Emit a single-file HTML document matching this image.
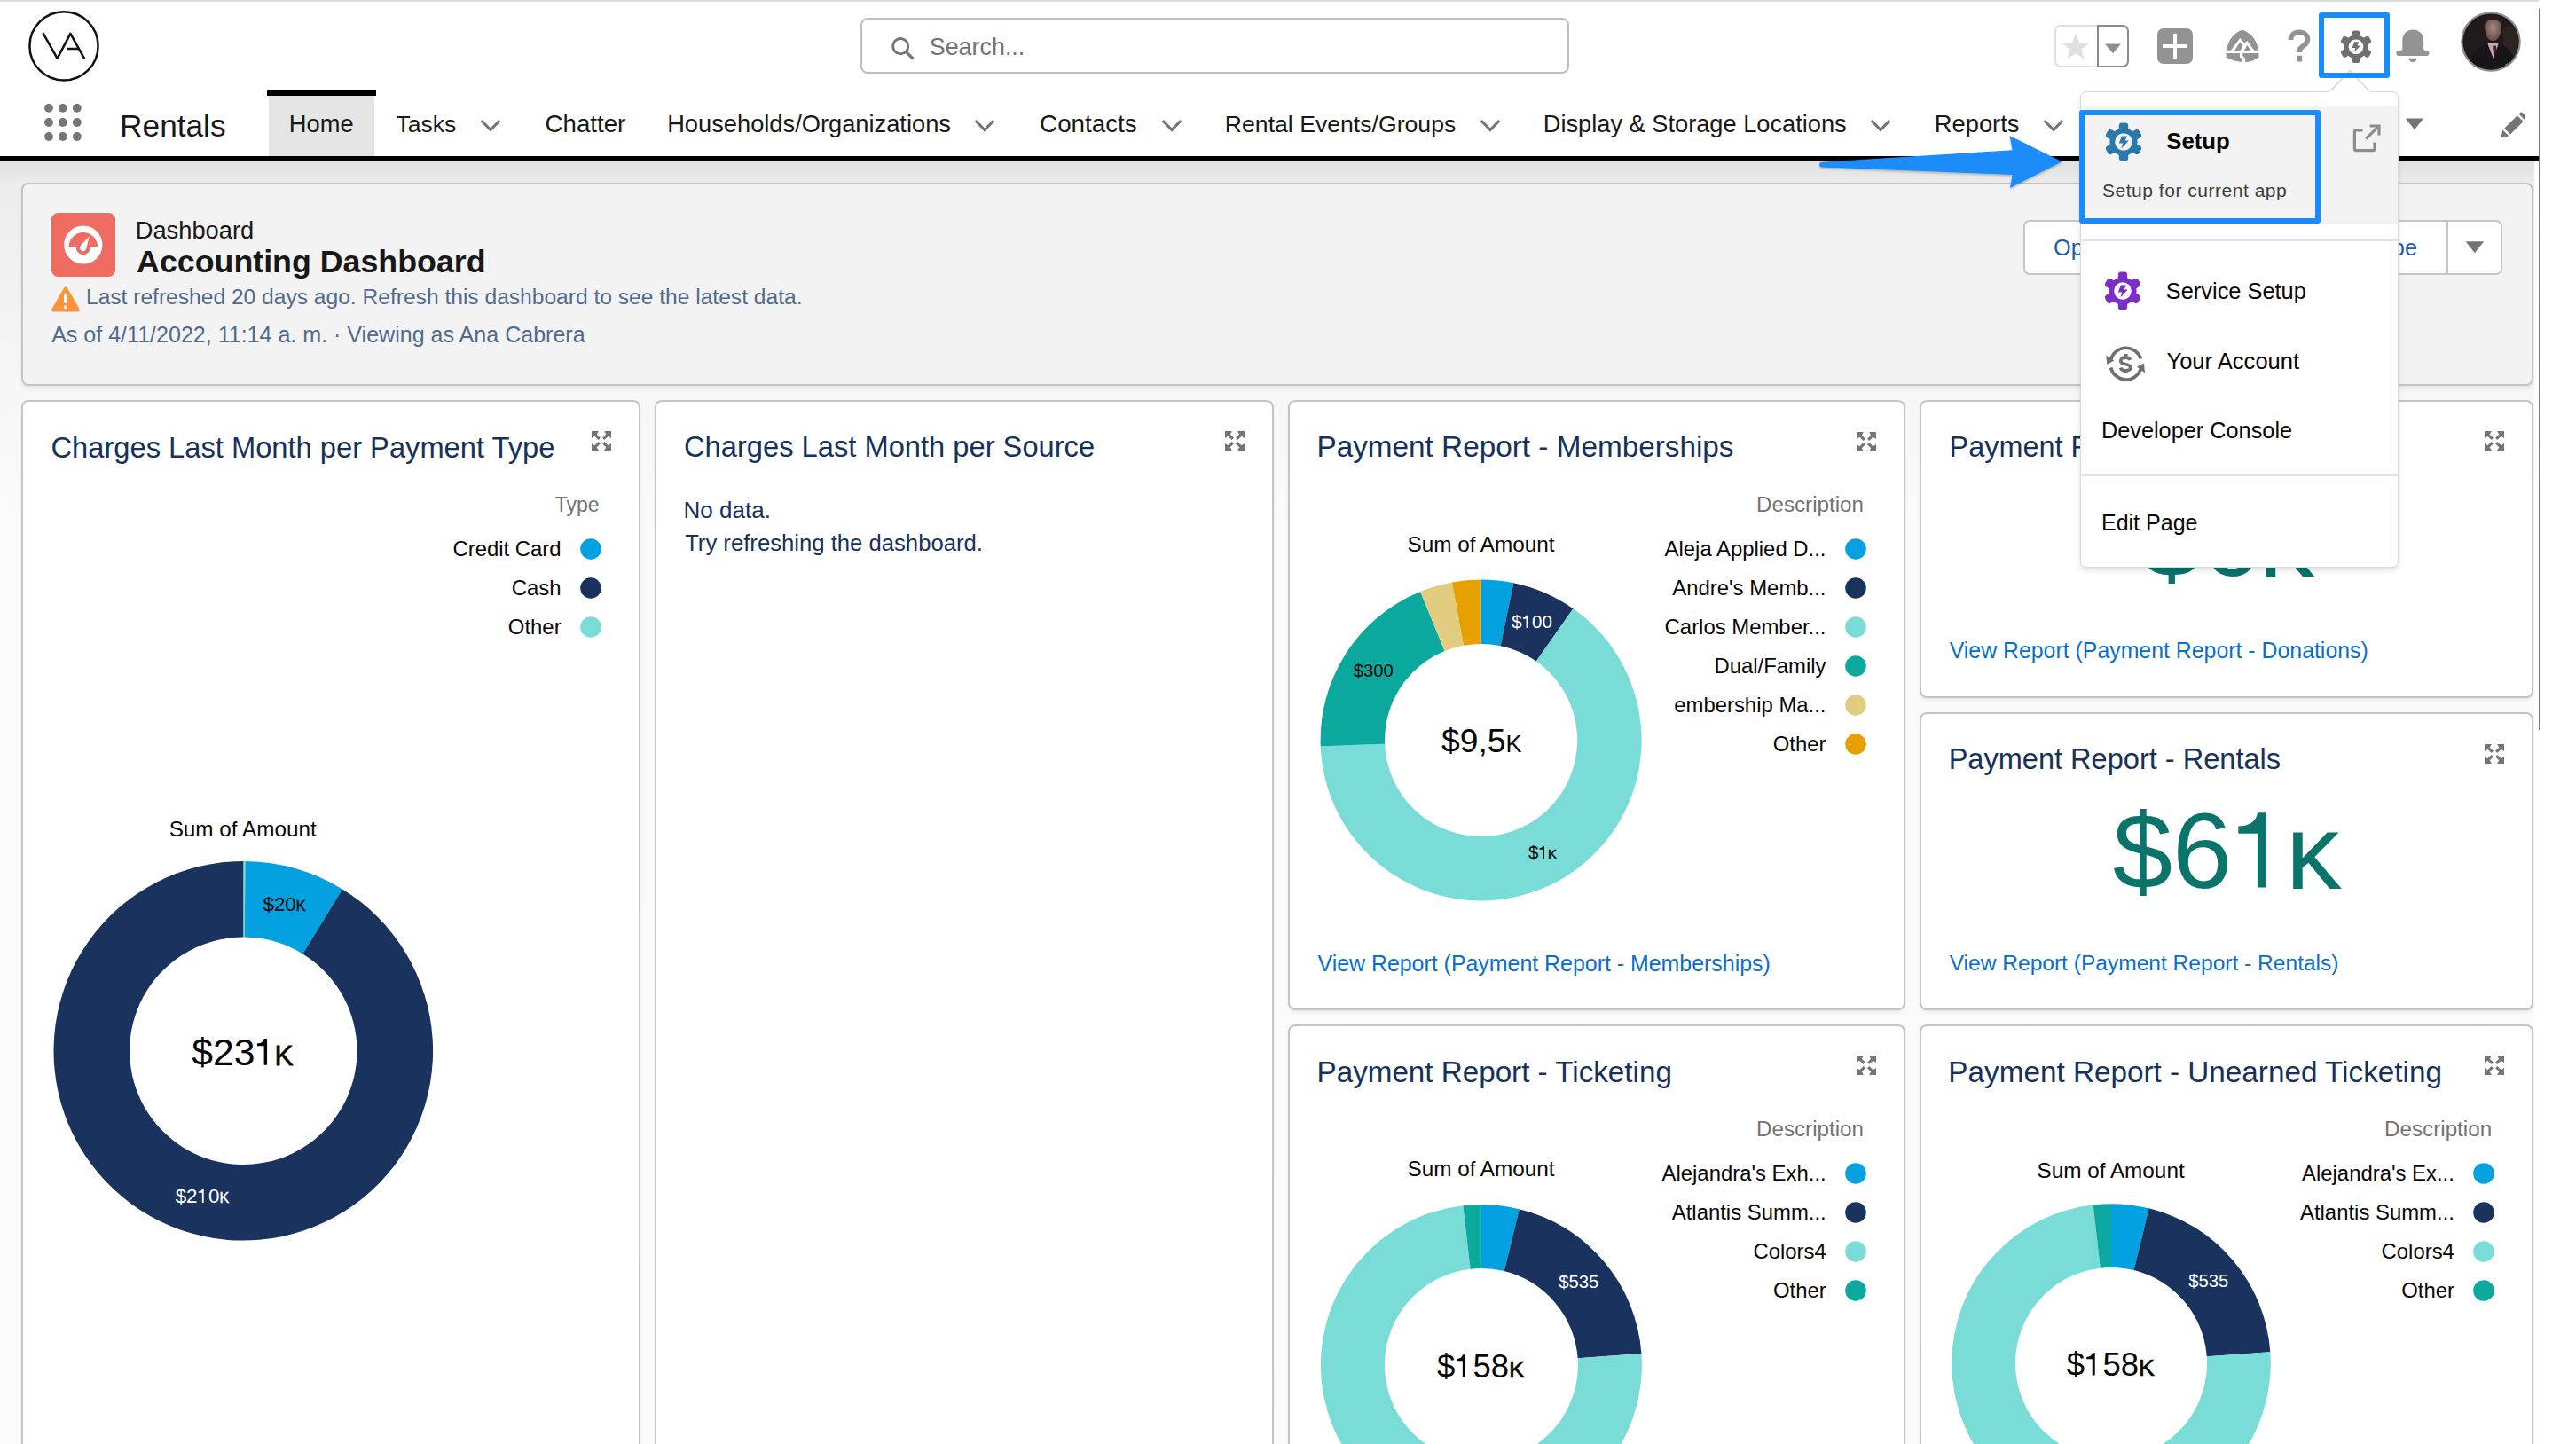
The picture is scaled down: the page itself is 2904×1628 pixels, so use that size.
<!DOCTYPE html>
<html><head><meta charset="utf-8"><title>Accounting Dashboard</title>
<style>
html,body{margin:0;padding:0;}
body{width:2904px;height:1628px;position:relative;overflow:hidden;background:#fff;font-family:"Liberation Sans", sans-serif;}
.t{position:absolute;white-space:nowrap;}
.b{position:absolute;}
svg.b{overflow:visible;}
</style></head><body>
<div class="b" style="left:0px;top:0px;width:2862px;height:2px;background:#dcdcdc"></div>
<div class="b" style="left:0px;top:2px;width:2862px;height:174px;background:#ffffff"></div>
<div class="b" style="left:0px;top:182px;width:2857px;height:1446px;background:linear-gradient(180deg,#e0e0e0 0px,#ececec 25px,#f1f1f1 120px,#f7f7f7 260px,#fafafa 420px,#fbfbfb 1446px)"></div>
<div class="b" style="left:0px;top:176px;width:2862px;height:6px;background:#000"></div>
<div class="b" style="left:2862px;top:10px;width:1.4px;height:813px;background:#7a7a7a"></div>
<svg class="b" style="left:30px;top:10px;" width="86" height="86" viewBox="0 0 86 86"><circle cx="42" cy="41.9" r="38.6" fill="none" stroke="#111" stroke-width="2.5"/><polyline points="18.8,27.8 34.6,55.8 49.4,27.8 65,55.8" fill="none" stroke="#111" stroke-width="2.5" stroke-linejoin="round" stroke-linecap="round"/><line x1="45.4" y1="45" x2="58.8" y2="45" stroke="#111" stroke-width="2.5"/></svg>
<div class="b" style="left:970px;top:20px;width:799px;height:63px;border:2px solid #bfbfbf;border-radius:8px;box-sizing:border-box;background:#fff"></div>
<svg class="b" style="left:1000px;top:38px;" width="36" height="34" viewBox="0 0 36 34"><circle cx="15.2" cy="14.1" r="8.6" fill="none" stroke="#747474" stroke-width="2.8"/><line x1="21.4" y1="20.3" x2="29.5" y2="28.3" stroke="#747474" stroke-width="3.2"/></svg>
<div class="t" style="top:39.85px;font-size:26.88px;line-height:26.88px;color:#747474;left:1047.76px;">Search...</div>
<div class="b" style="left:2316px;top:28px;width:50px;height:47.6px;border:2px solid #e0e0e0;border-radius:7px 0 0 7px;box-sizing:border-box;background:#fff"></div>
<div class="b" style="left:2364px;top:28px;width:36px;height:47.6px;border:2px solid #8a8a8a;border-radius:0 7px 7px 0;box-sizing:border-box;background:#fff"></div>
<svg class="b" style="left:2323px;top:36px;" width="34" height="34" viewBox="0 0 34 34"><g transform="translate(17,17) scale(1.1) translate(-16,-16)"><polygon points="16,1.5 19.6,11.6 30.2,11.9 21.8,18.4 24.8,28.6 16,22.6 7.2,28.6 10.2,18.4 1.8,11.9 12.4,11.6" fill="#e0e0e0"/></g></svg>
<svg class="b" style="left:2372px;top:48px;" width="20" height="14" viewBox="0 0 20 14"><polygon points="1,1.5 19,1.5 10,12.3" fill="#8f8f8f"/></svg>
<div class="b" style="left:2432px;top:32px;width:40px;height:40px;background:#939393;border-radius:7px"></div>
<div class="b" style="left:2438.3px;top:50.3px;width:27.2px;height:3.6px;background:#fff"></div>
<div class="b" style="left:2450.1px;top:38.4px;width:3.6px;height:27.4px;background:#fff"></div>
<svg class="b" style="left:2500px;top:25px;" width="56" height="56" viewBox="0 0 56 56"><path d="M10.1,31.8 C11.3,20.5 18.5,11.6 27.9,8.7 C37.3,11.6 44.7,20.5 45.9,31.8 Z" fill="#939393"/><path d="M9.5,35.1 L46.5,35.1 L46.5,39.6 C41.5,43 35.5,45 29.5,45.2 C22,45 15,43 9.5,39.6 Z" fill="#939393"/><polygon points="14.7,31.9 25.2,18 30.4,23.7 33.3,21.1 41.3,31.9" fill="#fff"/><polygon points="19,31.9 25.4,22.3 28.3,26.8 25.6,31.9" fill="#939393"/><polygon points="29.9,31.9 33.3,26 37.4,31.9" fill="#939393"/><path d="M26.6,34.6 L26.6,38.6 L29.5,41.6 L29.5,46" fill="none" stroke="#fff" stroke-width="3.3"/></svg>
<svg class="b" style="left:2576px;top:31.6px;" width="32" height="44" viewBox="0 0 32 44"><path d="M6.4,13 C6.4,7.4 10.6,4.4 16,4.4 C21.6,4.4 25.4,7.8 25.4,12.6 C25.4,17 22.4,18.8 19.8,20.4 C17.6,21.8 16.2,23 16.2,25.6 L16.2,27" fill="none" stroke="#939393" stroke-width="5.8"/><rect x="13.2" y="30.8" width="6" height="6.8" rx="0.8" fill="#939393"/></svg>
<svg class="b" style="left:2630px;top:30px;" width="52" height="46" viewBox="0 0 52 46"><g transform="translate(26,22.8) scale(0.85)"><rect x="-5.2" y="-21.5" width="10.4" height="12" rx="3.4" fill="#6f6f6f" transform="rotate(0)"/><rect x="-5.2" y="-21.5" width="10.4" height="12" rx="3.4" fill="#6f6f6f" transform="rotate(60)"/><rect x="-5.2" y="-21.5" width="10.4" height="12" rx="3.4" fill="#6f6f6f" transform="rotate(120)"/><rect x="-5.2" y="-21.5" width="10.4" height="12" rx="3.4" fill="#6f6f6f" transform="rotate(180)"/><rect x="-5.2" y="-21.5" width="10.4" height="12" rx="3.4" fill="#6f6f6f" transform="rotate(240)"/><rect x="-5.2" y="-21.5" width="10.4" height="12" rx="3.4" fill="#6f6f6f" transform="rotate(300)"/><circle r="15.6" fill="#6f6f6f"/><circle r="9.8" fill="#fff"/><path d="M-2.2,-6.6 L4,-6.6 L1.6,-1.6 L5.8,-1.6 L-2.6,7.4 L-0.8,1.4 L-5.2,1.4 Z" fill="#6f6f6f"/></g></svg>
<svg class="b" style="left:2700px;top:32px;" width="40" height="40" viewBox="0 0 40 40"><path d="M8.3,26.5 L8.3,13.6 C8.3,6.2 13.5,1.4 20.2,1.4 C26.9,1.4 32.1,6.2 32.1,13.6 L32.1,26.5 Z" fill="#939393"/><rect x="1.4" y="25.1" width="37" height="6" rx="3" fill="#939393"/><path d="M5,25.6 C7,25.4 8.3,24 8.3,22 L8.3,26 Z M35.4,25.6 C33.4,25.4 32.1,24 32.1,22 L32.1,26 Z" fill="#939393"/><path d="M15.6,33.8 L24.4,33.8 C24.4,36.6 22.4,38 20,38 C17.6,38 15.6,36.6 15.6,33.8 Z" fill="#939393"/></svg>
<svg class="b" style="left:2772px;top:11px;" width="72" height="72" viewBox="0 0 72 72"><defs><clipPath id="avc"><circle cx="36" cy="36" r="31.6"/></clipPath><radialGradient id="fg" cx="0.5" cy="0.45" r="0.6"><stop offset="0" stop-color="#a88a80"/><stop offset="1" stop-color="#5e4842"/></radialGradient></defs><circle cx="36" cy="36" r="33.8" fill="#8e8e8e"/><g clip-path="url(#avc)"><rect width="72" height="72" fill="#211a1a"/><rect x="50" y="20" width="22" height="40" fill="#2b2422"/><path d="M29,20 C29,12 32.5,8.5 38.6,8.5 C44.6,8.5 47.6,12 47.6,20 L46.8,27 C45,32.5 42,35 38.4,35 C34.8,35 31.6,32.5 30.2,27 Z" fill="url(#fg)"/><path d="M28.6,18 C28.6,10 32.6,6.4 38.6,6.4 C44.6,6.4 48.4,10 48,17 C46,12.6 42.4,11.2 38.4,11.2 C34.4,11.2 31,12.6 28.6,18 Z" fill="#2a1d19"/><path d="M32,37.5 L45,37 L46,52 L39,56 Z" fill="#b8adb3"/><path d="M38,41 L42,40.6 L43.4,54 L39.6,55 Z" fill="#4e1a28"/><path d="M6,72 C9,54 18,45 32,38 L39,56 L45,37 C55,41 63,50 67,72 Z" fill="#19141a"/><path d="M52,62 C54,60 57,60 58,62 C56,64 54,64 52,62 Z" fill="#9a9090"/></g></svg>
<svg class="b" style="left:45px;top:112px;" width="52" height="52" viewBox="0 0 52 52"><circle cx="10" cy="9.799999999999997" r="4.9" fill="#747474"/><circle cx="25.799999999999997" cy="9.799999999999997" r="4.9" fill="#747474"/><circle cx="41.8" cy="9.799999999999997" r="4.9" fill="#747474"/><circle cx="10" cy="26" r="4.9" fill="#747474"/><circle cx="25.799999999999997" cy="26" r="4.9" fill="#747474"/><circle cx="41.8" cy="26" r="4.9" fill="#747474"/><circle cx="10" cy="42" r="4.9" fill="#747474"/><circle cx="25.799999999999997" cy="42" r="4.9" fill="#747474"/><circle cx="41.8" cy="42" r="4.9" fill="#747474"/></svg>
<div class="t" style="top:123.58px;font-size:35.23px;line-height:35.23px;color:#181818;left:135.11px;">Rentals</div>
<div class="b" style="left:301px;top:102px;width:123px;height:6px;background:#000"></div>
<div class="b" style="left:303px;top:108px;width:119px;height:68px;background:#e5e5e5"></div>
<div class="t" style="top:126.28px;font-size:27.31px;line-height:27.31px;color:#181818;left:325.76px;">Home</div>
<div class="t" style="top:126.70px;font-size:26.58px;line-height:26.58px;color:#181818;left:446.42px;">Tasks</div>
<svg class="b" style="left:540.5px;top:134px;" width="24" height="16" viewBox="0 0 24 16"><polyline points="1.8,2 12,12.5 22.2,2" fill="none" stroke="#747474" stroke-width="3.2"/></svg>
<div class="t" style="top:125.79px;font-size:27.65px;line-height:27.65px;color:#181818;left:614.59px;">Chatter</div>
<div class="t" style="top:126.12px;font-size:27.27px;line-height:27.27px;color:#181818;left:752.16px;">Households/Organizations</div>
<svg class="b" style="left:1098px;top:134px;" width="24" height="16" viewBox="0 0 24 16"><polyline points="1.8,2 12,12.5 22.2,2" fill="none" stroke="#747474" stroke-width="3.2"/></svg>
<div class="t" style="top:125.68px;font-size:27.78px;line-height:27.78px;color:#181818;left:1172.08px;">Contacts</div>
<svg class="b" style="left:1308.6px;top:134px;" width="24" height="16" viewBox="0 0 24 16"><polyline points="1.8,2 12,12.5 22.2,2" fill="none" stroke="#747474" stroke-width="3.2"/></svg>
<div class="t" style="top:126.66px;font-size:26.63px;line-height:26.63px;color:#181818;left:1380.82px;">Rental Events/Groups</div>
<svg class="b" style="left:1668px;top:134px;" width="24" height="16" viewBox="0 0 24 16"><polyline points="1.8,2 12,12.5 22.2,2" fill="none" stroke="#747474" stroke-width="3.2"/></svg>
<div class="t" style="top:126.16px;font-size:27.22px;line-height:27.22px;color:#181818;left:1739.77px;">Display &amp; Storage Locations</div>
<svg class="b" style="left:2107.8px;top:134px;" width="24" height="16" viewBox="0 0 24 16"><polyline points="1.8,2 12,12.5 22.2,2" fill="none" stroke="#747474" stroke-width="3.2"/></svg>
<div class="t" style="top:126.06px;font-size:27.34px;line-height:27.34px;color:#181818;left:2180.76px;">Reports</div>
<svg class="b" style="left:2302.5px;top:134px;" width="24" height="16" viewBox="0 0 24 16"><polyline points="1.8,2 12,12.5 22.2,2" fill="none" stroke="#747474" stroke-width="3.2"/></svg>
<svg class="b" style="left:2710px;top:131px;" width="24" height="17" viewBox="0 0 24 17"><polygon points="1.9,2.4 22.1,2.4 12,15.3" fill="#747474"/></svg>
<svg class="b" style="left:2816px;top:127px;" width="32" height="32" viewBox="0 0 32 32"><path d="M3,28.8 L5.5,19.5 L12.3,26.3 Z" fill="#747474"/><path d="M7.2,17.8 L21.8,3.2 L28.6,10 L14,24.6 Z" fill="#747474"/><path d="M23.5,1.5 L25.2,0 C26,-0.6 27,-0.6 27.8,0.2 L30.6,3 C31.4,3.8 31.4,4.8 30.6,5.6 L30.3,8.3 Z" fill="#747474"/></svg>
<div class="b" style="left:24px;top:206px;width:2832px;height:229px;background:#f3f3f3;border:2px solid #c4c4c4;border-radius:8px;box-sizing:border-box;box-shadow:0 3px 5px rgba(0,0,0,0.07)"></div>
<svg class="b" style="left:58px;top:240px;" width="72" height="72" viewBox="0 0 72 72"><rect width="72" height="72" rx="7.5" fill="#ef6c63"/><circle cx="35.8" cy="36" r="21.6" fill="#fff"/><path d="M19.6,38.2 A16.2,16.2 0 0 1 52,38.2 Z" fill="#ef6c63"/><circle cx="35.8" cy="39" r="8.2" fill="#ef6c63"/><path d="M42.8,26.2 L39.4,39.6 A3.8,3.8 0 1 1 32.5,37.2 Z" fill="#fff"/></svg>
<div class="t" style="top:245.90px;font-size:27.29px;line-height:27.29px;color:#181818;left:152.76px;">Dashboard</div>
<div class="t" style="top:277.71px;font-size:35.78px;line-height:35.78px;color:#181818;font-weight:700;left:154.11px;">Accounting Dashboard</div>
<svg class="b" style="left:57px;top:322px;" width="34" height="30" viewBox="0 0 34 30"><path d="M17,1.6 C17.9,1.6 18.6,2.1 19,2.8 L32.6,26.4 C33.4,27.8 32.4,29.4 30.8,29.4 L3.2,29.4 C1.6,29.4 0.6,27.8 1.4,26.4 L15,2.8 C15.4,2.1 16.1,1.6 17,1.6 Z" fill="#fe9339"/><rect x="15.1" y="9.4" width="3.8" height="10.6" rx="1.4" fill="#fff"/><circle cx="17" cy="24.4" r="2.1" fill="#fff"/></svg>
<div class="t" style="top:323.18px;font-size:24.59px;line-height:24.59px;color:#516a8f;left:96.98px;">Last refreshed 20 days ago. Refresh this dashboard to see the latest data.</div>
<div class="t" style="top:364.59px;font-size:25.06px;line-height:25.06px;color:#516a8f;left:58.15px;">As of 4/11/2022, 11:14 a. m. &#183; Viewing as Ana Cabrera</div>
<div class="b" style="left:2281px;top:248px;width:540px;height:61.5px;background:#fff;border:2px solid #c6c6c6;border-radius:7px;box-sizing:border-box"></div>
<div class="b" style="left:2758.2px;top:248px;width:2px;height:61.5px;background:#c6c6c6"></div>
<div class="t" style="top:267.38px;font-size:25.3px;line-height:25.3px;color:#1b5ea6;left:2315.00px;">Open</div>
<div class="t" style="top:267.38px;font-size:25.3px;line-height:25.3px;color:#1b5ea6;right:179.00px;text-align:right;">Subscribe</div>
<svg class="b" style="left:2779px;top:270px;" width="22" height="17" viewBox="0 0 22 17"><polygon points="0.6,2.2 21.2,2.2 10.9,15.2" fill="#747474"/></svg>
<div class="b" style="left:24px;top:451px;width:698px;height:1200px;background:#fff;border:2px solid #c4c4c4;border-radius:8px;box-sizing:border-box;box-shadow:0 3px 4px rgba(0,0,0,0.06);border-bottom:none;border-radius:8px 8px 0 0"></div>
<div class="t" style="top:488.64px;font-size:32.68px;line-height:32.68px;color:#16325c;left:57.53px;">Charges Last Month per Payment Type</div>
<svg class="b" style="left:667px;top:486px;" width="22" height="22" viewBox="0 0 21.8 21.8"><polygon points="0,0 7.85,0 5.7,3.6 9.85,7.7 7.6,9.85 3.4,5.7 0,7.85" fill="#747474"/><g transform="translate(21.8,0) scale(-1,1)"><polygon points="0,0 7.85,0 5.7,3.6 9.85,7.7 7.6,9.85 3.4,5.7 0,7.85" fill="#747474"/></g><g transform="translate(0,21.8) scale(1,-1)"><polygon points="0,0 7.85,0 5.7,3.6 9.85,7.7 7.6,9.85 3.4,5.7 0,7.85" fill="#747474"/></g><g transform="translate(21.8,21.8) scale(-1,-1)"><polygon points="0,0 7.85,0 5.7,3.6 9.85,7.7 7.6,9.85 3.4,5.7 0,7.85" fill="#747474"/></g></svg>
<div class="t" style="top:557.83px;font-size:23px;line-height:23px;color:#737373;right:2228.40px;text-align:right;">Type</div>
<div class="t" style="top:606.67px;font-size:23.9px;line-height:23.9px;color:#080707;right:2271.40px;text-align:right;">Credit Card</div>
<svg class="b" style="left:653.9px;top:606.7px;" width="24" height="24" viewBox="0 0 24 24"><circle cx="12" cy="12" r="11.8" fill="#03a1e0"/></svg>
<div class="t" style="top:650.57px;font-size:23.9px;line-height:23.9px;color:#080707;right:2271.40px;text-align:right;">Cash</div>
<svg class="b" style="left:653.9px;top:650.6px;" width="24" height="24" viewBox="0 0 24 24"><circle cx="12" cy="12" r="11.8" fill="#1a325e"/></svg>
<div class="t" style="top:694.97px;font-size:23.9px;line-height:23.9px;color:#080707;right:2271.40px;text-align:right;">Other</div>
<svg class="b" style="left:653.9px;top:695px;" width="24" height="24" viewBox="0 0 24 24"><circle cx="12" cy="12" r="11.8" fill="#7adcd6"/></svg>
<div class="t" style="top:923.33px;font-size:24.3px;line-height:24.3px;color:#080707;left:-326.30px;width:1200px;text-align:center;">Sum of Amount</div>
<svg class="b" style="left:58px;top:969px;" width="432" height="432" viewBox="0 0 432 432"><path d="M216.30,2.00 A213.8,213.8 0 0 1 218.54,2.01 L217.64,87.61 A128.2,128.2 0 0 0 216.30,87.60 Z" fill="#7adcd6"/><path d="M218.54,2.01 A213.8,213.8 0 0 1 328.01,33.51 L283.28,106.49 A128.2,128.2 0 0 0 217.64,87.61 Z" fill="#03a1e0"/><path d="M328.01,33.51 A213.8,213.8 0 1 1 216.30,2.00 L216.30,87.60 A128.2,128.2 0 1 0 283.28,106.49 Z" fill="#1a325e"/></svg>
<svg class="b" style="left:292px;top:1003px;" width="57" height="31" viewBox="0 0 57 31"><text x="4.48" y="23.70" font-size="22.4" font-family="Liberation Sans" fill="#080707">$20</text><text x="41.85" y="23.70" font-size="16.3" font-family="Liberation Sans" fill="#080707" stroke="#080707" stroke-width="0.41">K</text></svg>
<svg class="b" style="left:193px;top:1332px;" width="69" height="31" viewBox="0 0 69 31"><text x="4.65" y="24.00" font-size="22.4" font-family="Liberation Sans" fill="#ffffff">$2</text><path transform="translate(29.56,24.00) scale(22.4)" d="M0.237,-0.696 L0.318,-0.696 L0.318,0 L0.237,0 L0.237,-0.502 L0.058,-0.502 L0.058,-0.570 C0.174,-0.574 0.228,-0.624 0.237,-0.696 Z" fill="#ffffff"/><text x="42.02" y="24.00" font-size="22.4" font-family="Liberation Sans" fill="#ffffff">0</text><text x="54.48" y="24.00" font-size="16.3" font-family="Liberation Sans" fill="#ffffff" stroke="#ffffff" stroke-width="0.41">K</text></svg>
<svg class="b" style="left:212px;top:1155px;" width="123" height="58" viewBox="0 0 123 58"><text x="4.24" y="45.70" font-size="42.7" font-family="Liberation Sans" fill="#080707">$23</text><path transform="translate(75.49,45.70) scale(42.7)" d="M0.237,-0.696 L0.318,-0.696 L0.318,0 L0.237,0 L0.237,-0.502 L0.058,-0.502 L0.058,-0.570 C0.174,-0.574 0.228,-0.624 0.237,-0.696 Z" fill="#080707"/><text x="97.61" y="45.70" font-size="31.4" font-family="Liberation Sans" fill="#080707" stroke="#080707" stroke-width="0.79">K</text></svg>
<div class="b" style="left:738px;top:451px;width:698px;height:1200px;background:#fff;border:2px solid #c4c4c4;border-radius:8px;box-sizing:border-box;box-shadow:0 3px 4px rgba(0,0,0,0.06);border-bottom:none;border-radius:8px 8px 0 0"></div>
<div class="t" style="top:488.33px;font-size:32.69px;line-height:32.69px;color:#16325c;left:771.03px;">Charges Last Month per Source</div>
<svg class="b" style="left:1381px;top:486px;" width="22" height="22" viewBox="0 0 21.8 21.8"><polygon points="0,0 7.85,0 5.7,3.6 9.85,7.7 7.6,9.85 3.4,5.7 0,7.85" fill="#747474"/><g transform="translate(21.8,0) scale(-1,1)"><polygon points="0,0 7.85,0 5.7,3.6 9.85,7.7 7.6,9.85 3.4,5.7 0,7.85" fill="#747474"/></g><g transform="translate(0,21.8) scale(1,-1)"><polygon points="0,0 7.85,0 5.7,3.6 9.85,7.7 7.6,9.85 3.4,5.7 0,7.85" fill="#747474"/></g><g transform="translate(21.8,21.8) scale(-1,-1)"><polygon points="0,0 7.85,0 5.7,3.6 9.85,7.7 7.6,9.85 3.4,5.7 0,7.85" fill="#747474"/></g></svg>
<div class="t" style="top:561.79px;font-size:26.0px;line-height:26.0px;color:#16325c;left:770.57px;">No data.</div>
<div class="t" style="top:599.56px;font-size:25.68px;line-height:25.68px;color:#16325c;left:772.14px;">Try refreshing the dashboard.</div>
<div class="b" style="left:1452px;top:451px;width:696px;height:688px;background:#fff;border:2px solid #c4c4c4;border-radius:8px;box-sizing:border-box;box-shadow:0 3px 4px rgba(0,0,0,0.06)"></div>
<div class="t" style="top:487.11px;font-size:33.3px;line-height:33.3px;color:#16325c;left:1484.47px;">Payment Report - Memberships</div>
<svg class="b" style="left:2093px;top:486.5px;" width="22" height="22" viewBox="0 0 21.8 21.8"><polygon points="0,0 7.85,0 5.7,3.6 9.85,7.7 7.6,9.85 3.4,5.7 0,7.85" fill="#747474"/><g transform="translate(21.8,0) scale(-1,1)"><polygon points="0,0 7.85,0 5.7,3.6 9.85,7.7 7.6,9.85 3.4,5.7 0,7.85" fill="#747474"/></g><g transform="translate(0,21.8) scale(1,-1)"><polygon points="0,0 7.85,0 5.7,3.6 9.85,7.7 7.6,9.85 3.4,5.7 0,7.85" fill="#747474"/></g><g transform="translate(21.8,21.8) scale(-1,-1)"><polygon points="0,0 7.85,0 5.7,3.6 9.85,7.7 7.6,9.85 3.4,5.7 0,7.85" fill="#747474"/></g></svg>
<div class="t" style="top:556.51px;font-size:24.2px;line-height:24.2px;color:#737373;right:803.00px;text-align:right;">Description</div>
<div class="t" style="top:606.87px;font-size:23.9px;line-height:23.9px;color:#080707;right:845.50px;text-align:right;">Aleja Applied D...</div>
<svg class="b" style="left:2080px;top:606.9px;" width="24" height="24" viewBox="0 0 24 24"><circle cx="12" cy="12" r="11.8" fill="#03a1e0"/></svg>
<div class="t" style="top:650.97px;font-size:23.9px;line-height:23.9px;color:#080707;right:845.50px;text-align:right;">Andre's Memb...</div>
<svg class="b" style="left:2080px;top:651px;" width="24" height="24" viewBox="0 0 24 24"><circle cx="12" cy="12" r="11.8" fill="#1a325e"/></svg>
<div class="t" style="top:695.17px;font-size:23.9px;line-height:23.9px;color:#080707;right:845.50px;text-align:right;">Carlos Member...</div>
<svg class="b" style="left:2080px;top:695.2px;" width="24" height="24" viewBox="0 0 24 24"><circle cx="12" cy="12" r="11.8" fill="#7adcd6"/></svg>
<div class="t" style="top:738.77px;font-size:23.9px;line-height:23.9px;color:#080707;right:845.50px;text-align:right;">Dual/Family</div>
<svg class="b" style="left:2080px;top:738.8px;" width="24" height="24" viewBox="0 0 24 24"><circle cx="12" cy="12" r="11.8" fill="#0aa89d"/></svg>
<div class="t" style="top:782.97px;font-size:23.9px;line-height:23.9px;color:#080707;right:845.50px;text-align:right;">embership Ma...</div>
<svg class="b" style="left:2080px;top:783px;" width="24" height="24" viewBox="0 0 24 24"><circle cx="12" cy="12" r="11.8" fill="#e2cc80"/></svg>
<div class="t" style="top:827.07px;font-size:23.9px;line-height:23.9px;color:#080707;right:845.50px;text-align:right;">Other</div>
<svg class="b" style="left:2080px;top:827.1px;" width="24" height="24" viewBox="0 0 24 24"><circle cx="12" cy="12" r="11.8" fill="#e6a000"/></svg>
<div class="t" style="top:602.23px;font-size:24.3px;line-height:24.3px;color:#080707;left:1069.50px;width:1200px;text-align:center;">Sum of Amount</div>
<svg class="b" style="left:1486px;top:651px;" width="366" height="366" viewBox="0 0 366 366"><path d="M183.60,2.50 A181,181 0 0 1 220.30,6.26 L205.60,77.25 A108.5,108.5 0 0 0 183.60,75.00 Z" fill="#03a1e0"/><path d="M220.30,6.26 A181,181 0 0 1 287.42,35.23 L245.83,94.62 A108.5,108.5 0 0 0 205.60,77.25 Z" fill="#1a325e"/><path d="M287.42,35.23 A181,181 0 1 1 2.73,190.45 L75.18,187.67 A108.5,108.5 0 1 0 245.83,94.62 Z" fill="#7adcd6"/><path d="M2.73,190.45 A181,181 0 0 1 115.21,15.92 L142.60,83.04 A108.5,108.5 0 0 0 75.18,187.67 Z" fill="#0aa89d"/><path d="M115.21,15.92 A181,181 0 0 1 150.93,5.47 L164.01,76.78 A108.5,108.5 0 0 0 142.60,83.04 Z" fill="#e2cc80"/><path d="M150.93,5.47 A181,181 0 0 1 183.60,2.50 L183.60,75.00 A108.5,108.5 0 0 0 164.01,76.78 Z" fill="#e6a000"/></svg>
<svg class="b" style="left:1700px;top:686px;" width="54" height="28" viewBox="0 0 54 28"><text x="4.30" y="22.00" font-size="20.5" font-family="Liberation Sans" fill="#ffffff">$</text><path transform="translate(15.70,22.00) scale(20.5)" d="M0.237,-0.696 L0.318,-0.696 L0.318,0 L0.237,0 L0.237,-0.502 L0.058,-0.502 L0.058,-0.570 C0.174,-0.574 0.228,-0.624 0.237,-0.696 Z" fill="#ffffff"/><text x="27.10" y="22.00" font-size="20.5" font-family="Liberation Sans" fill="#ffffff">00</text></svg>
<div class="t" style="top:745.62px;font-size:20.3px;line-height:20.3px;color:#080707;left:948.30px;width:1200px;text-align:center;">$300</div>
<svg class="b" style="left:1718px;top:946px;" width="41" height="28" viewBox="0 0 41 28"><text x="4.99" y="22.00" font-size="20.5" font-family="Liberation Sans" fill="#080707">$</text><path transform="translate(16.39,22.00) scale(20.5)" d="M0.237,-0.696 L0.318,-0.696 L0.318,0 L0.237,0 L0.237,-0.502 L0.058,-0.502 L0.058,-0.570 C0.174,-0.574 0.228,-0.624 0.237,-0.696 Z" fill="#080707"/><text x="27.01" y="22.00" font-size="15" font-family="Liberation Sans" fill="#080707" stroke="#080707" stroke-width="0.38">K</text></svg>
<div class="t" style="top:817.41px;font-size:37.2px;line-height:37.2px;color:#080707;left:1070.30px;width:1200px;text-align:center;">$9,5<span style="font-size:27.0px">K</span></div>
<div class="t" style="top:1073.91px;font-size:24.92px;line-height:24.92px;color:#0a6fc9;left:1485.48px;">View Report (Payment Report - Memberships)</div>
<div class="b" style="left:2164px;top:451px;width:692px;height:336px;background:#fff;border:2px solid #c4c4c4;border-radius:8px;box-sizing:border-box;box-shadow:0 3px 4px rgba(0,0,0,0.06)"></div>
<div class="t" style="top:488.17px;font-size:32.4px;line-height:32.4px;color:#16325c;left:2197.60px;">Payment Report - Donations</div>
<svg class="b" style="left:2801px;top:486px;" width="22" height="22" viewBox="0 0 21.8 21.8"><polygon points="0,0 7.85,0 5.7,3.6 9.85,7.7 7.6,9.85 3.4,5.7 0,7.85" fill="#747474"/><g transform="translate(21.8,0) scale(-1,1)"><polygon points="0,0 7.85,0 5.7,3.6 9.85,7.7 7.6,9.85 3.4,5.7 0,7.85" fill="#747474"/></g><g transform="translate(0,21.8) scale(1,-1)"><polygon points="0,0 7.85,0 5.7,3.6 9.85,7.7 7.6,9.85 3.4,5.7 0,7.85" fill="#747474"/></g><g transform="translate(21.8,21.8) scale(-1,-1)"><polygon points="0,0 7.85,0 5.7,3.6 9.85,7.7 7.6,9.85 3.4,5.7 0,7.85" fill="#747474"/></g></svg>
<svg class="b" style="left:2410px;top:521px;" width="202" height="164" viewBox="0 0 202 164"><text x="4.02" y="128.00" font-size="121" font-family="Liberation Sans" fill="#0a736a">$6</text><text x="138.61" y="128.00" font-size="89" font-family="Liberation Sans" fill="#0a736a" stroke="#0a736a" stroke-width="2.23">K</text></svg>
<div class="t" style="top:721.45px;font-size:24.87px;line-height:24.87px;color:#0a6fc9;left:2197.68px;">View Report (Payment Report - Donations)</div>
<div class="b" style="left:2164px;top:803px;width:692px;height:336px;background:#fff;border:2px solid #c4c4c4;border-radius:8px;box-sizing:border-box;box-shadow:0 3px 4px rgba(0,0,0,0.06)"></div>
<div class="t" style="top:840.45px;font-size:32.55px;line-height:32.55px;color:#16325c;left:2196.63px;">Payment Report - Rentals</div>
<svg class="b" style="left:2801px;top:838.5px;" width="22" height="22" viewBox="0 0 21.8 21.8"><polygon points="0,0 7.85,0 5.7,3.6 9.85,7.7 7.6,9.85 3.4,5.7 0,7.85" fill="#747474"/><g transform="translate(21.8,0) scale(-1,1)"><polygon points="0,0 7.85,0 5.7,3.6 9.85,7.7 7.6,9.85 3.4,5.7 0,7.85" fill="#747474"/></g><g transform="translate(0,21.8) scale(1,-1)"><polygon points="0,0 7.85,0 5.7,3.6 9.85,7.7 7.6,9.85 3.4,5.7 0,7.85" fill="#747474"/></g><g transform="translate(21.8,21.8) scale(-1,-1)"><polygon points="0,0 7.85,0 5.7,3.6 9.85,7.7 7.6,9.85 3.4,5.7 0,7.85" fill="#747474"/></g></svg>
<svg class="b" style="left:2377px;top:873px;" width="265" height="164" viewBox="0 0 265 164"><text x="4.68" y="127.50" font-size="121" font-family="Liberation Sans" fill="#0a736a">$6</text><path transform="translate(139.26,127.50) scale(121)" d="M0.237,-0.696 L0.318,-0.696 L0.318,0 L0.237,0 L0.237,-0.502 L0.058,-0.502 L0.058,-0.570 C0.174,-0.574 0.228,-0.624 0.237,-0.696 Z" fill="#0a736a"/><text x="201.96" y="127.50" font-size="89" font-family="Liberation Sans" fill="#0a736a" stroke="#0a736a" stroke-width="2.23">K</text></svg>
<div class="t" style="top:1073.61px;font-size:24.56px;line-height:24.56px;color:#0a6fc9;left:2197.68px;">View Report (Payment Report - Rentals)</div>
<div class="b" style="left:1452px;top:1155px;width:696px;height:600px;background:#fff;border:2px solid #c4c4c4;border-radius:8px;box-sizing:border-box;box-shadow:0 3px 4px rgba(0,0,0,0.06);border-bottom:none;border-radius:8px 8px 0 0"></div>
<div class="t" style="top:1192.40px;font-size:33.2px;line-height:33.2px;color:#16325c;left:1484.58px;">Payment Report - Ticketing</div>
<svg class="b" style="left:2093px;top:1190px;" width="22" height="22" viewBox="0 0 21.8 21.8"><polygon points="0,0 7.85,0 5.7,3.6 9.85,7.7 7.6,9.85 3.4,5.7 0,7.85" fill="#747474"/><g transform="translate(21.8,0) scale(-1,1)"><polygon points="0,0 7.85,0 5.7,3.6 9.85,7.7 7.6,9.85 3.4,5.7 0,7.85" fill="#747474"/></g><g transform="translate(0,21.8) scale(1,-1)"><polygon points="0,0 7.85,0 5.7,3.6 9.85,7.7 7.6,9.85 3.4,5.7 0,7.85" fill="#747474"/></g><g transform="translate(21.8,21.8) scale(-1,-1)"><polygon points="0,0 7.85,0 5.7,3.6 9.85,7.7 7.6,9.85 3.4,5.7 0,7.85" fill="#747474"/></g></svg>
<div class="t" style="top:1260.81px;font-size:24.2px;line-height:24.2px;color:#737373;right:803.00px;text-align:right;">Description</div>
<div class="t" style="top:1311.17px;font-size:23.9px;line-height:23.9px;color:#080707;right:845.30px;text-align:right;">Alejandra's Exh...</div>
<svg class="b" style="left:2079.8px;top:1311.2px;" width="24" height="24" viewBox="0 0 24 24"><circle cx="12" cy="12" r="11.8" fill="#03a1e0"/></svg>
<div class="t" style="top:1355.17px;font-size:23.9px;line-height:23.9px;color:#080707;right:845.30px;text-align:right;">Atlantis Summ...</div>
<svg class="b" style="left:2079.8px;top:1355.2px;" width="24" height="24" viewBox="0 0 24 24"><circle cx="12" cy="12" r="11.8" fill="#1a325e"/></svg>
<div class="t" style="top:1399.07px;font-size:23.9px;line-height:23.9px;color:#080707;right:845.30px;text-align:right;">Colors4</div>
<svg class="b" style="left:2079.8px;top:1399.1px;" width="24" height="24" viewBox="0 0 24 24"><circle cx="12" cy="12" r="11.8" fill="#7adcd6"/></svg>
<div class="t" style="top:1442.97px;font-size:23.9px;line-height:23.9px;color:#080707;right:845.30px;text-align:right;">Other</div>
<svg class="b" style="left:2079.8px;top:1443px;" width="24" height="24" viewBox="0 0 24 24"><circle cx="12" cy="12" r="11.8" fill="#0aa89d"/></svg>
<div class="t" style="top:1306.43px;font-size:24.3px;line-height:24.3px;color:#080707;left:1069.50px;width:1200px;text-align:center;">Sum of Amount</div>
<svg class="b" style="left:1486px;top:1356px;" width="366" height="366" viewBox="0 0 366 366"><path d="M183.90,2.00 A181,181 0 0 1 226.77,7.15 L209.72,77.10 A109,109 0 0 0 183.90,74.00 Z" fill="#03a1e0"/><path d="M226.77,7.15 A181,181 0 0 1 364.44,170.06 L292.62,175.21 A109,109 0 0 0 209.72,77.10 Z" fill="#1a325e"/><path d="M364.44,170.06 A181,181 0 1 1 163.41,3.16 L171.56,74.70 A109,109 0 1 0 292.62,175.21 Z" fill="#7adcd6"/><path d="M163.41,3.16 A181,181 0 0 1 183.90,2.00 L183.90,74.00 A109,109 0 0 0 171.56,74.70 Z" fill="#0aa89d"/></svg>
<div class="t" style="top:1435.32px;font-size:20.3px;line-height:20.3px;color:#ffffff;left:1179.80px;width:1200px;text-align:center;">$535</div>
<svg class="b" style="left:1615px;top:1514px;" width="108" height="50" viewBox="0 0 108 50"><text x="4.90" y="38.60" font-size="36.5" font-family="Liberation Sans" fill="#080707">$</text><path transform="translate(25.20,38.60) scale(36.5)" d="M0.237,-0.696 L0.318,-0.696 L0.318,0 L0.237,0 L0.237,-0.502 L0.058,-0.502 L0.058,-0.570 C0.174,-0.574 0.228,-0.624 0.237,-0.696 Z" fill="#080707"/><text x="45.50" y="38.60" font-size="36.5" font-family="Liberation Sans" fill="#080707">58</text><text x="86.09" y="38.60" font-size="26.7" font-family="Liberation Sans" fill="#080707" stroke="#080707" stroke-width="0.67">K</text></svg>
<div class="b" style="left:2164px;top:1155px;width:692px;height:600px;background:#fff;border:2px solid #c4c4c4;border-radius:8px;box-sizing:border-box;box-shadow:0 3px 4px rgba(0,0,0,0.06);border-bottom:none;border-radius:8px 8px 0 0"></div>
<div class="t" style="top:1192.23px;font-size:33.28px;line-height:33.28px;color:#16325c;left:2196.37px;">Payment Report - Unearned Ticketing</div>
<svg class="b" style="left:2801.3px;top:1190px;" width="22" height="22" viewBox="0 0 21.8 21.8"><polygon points="0,0 7.85,0 5.7,3.6 9.85,7.7 7.6,9.85 3.4,5.7 0,7.85" fill="#747474"/><g transform="translate(21.8,0) scale(-1,1)"><polygon points="0,0 7.85,0 5.7,3.6 9.85,7.7 7.6,9.85 3.4,5.7 0,7.85" fill="#747474"/></g><g transform="translate(0,21.8) scale(1,-1)"><polygon points="0,0 7.85,0 5.7,3.6 9.85,7.7 7.6,9.85 3.4,5.7 0,7.85" fill="#747474"/></g><g transform="translate(21.8,21.8) scale(-1,-1)"><polygon points="0,0 7.85,0 5.7,3.6 9.85,7.7 7.6,9.85 3.4,5.7 0,7.85" fill="#747474"/></g></svg>
<div class="t" style="top:1260.51px;font-size:24.2px;line-height:24.2px;color:#737373;right:94.90px;text-align:right;">Description</div>
<div class="t" style="top:1311.17px;font-size:23.9px;line-height:23.9px;color:#080707;right:137.10px;text-align:right;">Alejandra's Ex...</div>
<svg class="b" style="left:2787.7px;top:1311.2px;" width="24" height="24" viewBox="0 0 24 24"><circle cx="12" cy="12" r="11.8" fill="#03a1e0"/></svg>
<div class="t" style="top:1355.17px;font-size:23.9px;line-height:23.9px;color:#080707;right:137.10px;text-align:right;">Atlantis Summ...</div>
<svg class="b" style="left:2787.7px;top:1355.2px;" width="24" height="24" viewBox="0 0 24 24"><circle cx="12" cy="12" r="11.8" fill="#1a325e"/></svg>
<div class="t" style="top:1399.07px;font-size:23.9px;line-height:23.9px;color:#080707;right:137.10px;text-align:right;">Colors4</div>
<svg class="b" style="left:2787.7px;top:1399.1px;" width="24" height="24" viewBox="0 0 24 24"><circle cx="12" cy="12" r="11.8" fill="#7adcd6"/></svg>
<div class="t" style="top:1442.97px;font-size:23.9px;line-height:23.9px;color:#080707;right:137.10px;text-align:right;">Other</div>
<svg class="b" style="left:2787.7px;top:1443px;" width="24" height="24" viewBox="0 0 24 24"><circle cx="12" cy="12" r="11.8" fill="#0aa89d"/></svg>
<div class="t" style="top:1308.03px;font-size:24.3px;line-height:24.3px;color:#080707;left:1779.60px;width:1200px;text-align:center;">Sum of Amount</div>
<svg class="b" style="left:2198px;top:1355px;" width="364" height="364" viewBox="0 0 364 364"><path d="M182.00,2.20 A179.8,179.8 0 0 1 224.58,7.32 L207.58,77.07 A108,108 0 0 0 182.00,74.00 Z" fill="#03a1e0"/><path d="M224.58,7.32 A179.8,179.8 0 0 1 361.34,169.14 L289.72,174.28 A108,108 0 0 0 207.58,77.07 Z" fill="#1a325e"/><path d="M361.34,169.14 A179.8,179.8 0 1 1 161.65,3.36 L169.77,74.69 A108,108 0 1 0 289.72,174.28 Z" fill="#7adcd6"/><path d="M161.65,3.36 A179.8,179.8 0 0 1 182.00,2.20 L182.00,74.00 A108,108 0 0 0 169.77,74.69 Z" fill="#0aa89d"/></svg>
<div class="t" style="top:1433.52px;font-size:20.3px;line-height:20.3px;color:#ffffff;left:1889.80px;width:1200px;text-align:center;">$535</div>
<svg class="b" style="left:2325px;top:1512px;" width="108" height="50" viewBox="0 0 108 50"><text x="4.80" y="38.60" font-size="36.5" font-family="Liberation Sans" fill="#080707">$</text><path transform="translate(25.10,38.60) scale(36.5)" d="M0.237,-0.696 L0.318,-0.696 L0.318,0 L0.237,0 L0.237,-0.502 L0.058,-0.502 L0.058,-0.570 C0.174,-0.574 0.228,-0.624 0.237,-0.696 Z" fill="#080707"/><text x="45.40" y="38.60" font-size="36.5" font-family="Liberation Sans" fill="#080707">58</text><text x="85.99" y="38.60" font-size="26.7" font-family="Liberation Sans" fill="#080707" stroke="#080707" stroke-width="0.67">K</text></svg>
<svg class="b" style="left:2622px;top:76px;" width="54" height="30" viewBox="0 0 54 30"><polygon points="5,27 27,3.5 49,27" fill="#fff" stroke="#d8d8d8" stroke-width="1.5"/><rect x="0" y="27" width="54" height="3" fill="#fff"/></svg>
<div class="b" style="left:2345px;top:103px;width:359px;height:537px;background:#fff;border:1.5px solid #dadada;border-radius:7px;box-sizing:border-box;box-shadow:0 3px 6px rgba(0,0,0,0.13)"></div>
<svg class="b" style="left:2622px;top:76px;" width="54" height="30" viewBox="0 0 54 30"><polygon points="5,27 27,3.5 49,27" fill="#fff" stroke="#d8d8d8" stroke-width="1.5"/><rect x="4" y="26.2" width="46" height="4" fill="#fff"/></svg>
<div class="b" style="left:2614px;top:14px;width:80px;height:73.5px;border:6px solid #1b8dfb;border-radius:3px;box-sizing:border-box"></div>
<div class="b" style="left:2346.5px;top:120px;width:356px;height:133px;background:#f3f3f3"></div>
<div class="b" style="left:2346.5px;top:270px;width:356px;height:2px;background:#e2e2e2"></div>
<div class="b" style="left:2346.5px;top:534.4px;width:356px;height:2.2px;background:#e2e2e2"></div>
<div class="b" style="left:2344px;top:124px;width:272px;height:127.5px;border:6px solid #1a8cff;border-radius:3px;box-sizing:border-box"></div>
<svg class="b" style="left:2370px;top:136px;" width="48" height="48" viewBox="0 0 48 48"><g transform="translate(24,24) scale(1.0)"><rect x="-5.2" y="-21.5" width="10.4" height="12" rx="3.4" fill="#2a78ad" transform="rotate(0)"/><rect x="-5.2" y="-21.5" width="10.4" height="12" rx="3.4" fill="#2a78ad" transform="rotate(60)"/><rect x="-5.2" y="-21.5" width="10.4" height="12" rx="3.4" fill="#2a78ad" transform="rotate(120)"/><rect x="-5.2" y="-21.5" width="10.4" height="12" rx="3.4" fill="#2a78ad" transform="rotate(180)"/><rect x="-5.2" y="-21.5" width="10.4" height="12" rx="3.4" fill="#2a78ad" transform="rotate(240)"/><rect x="-5.2" y="-21.5" width="10.4" height="12" rx="3.4" fill="#2a78ad" transform="rotate(300)"/><circle r="15.6" fill="#2a78ad"/><circle r="9.8" fill="#f3f3f3"/><path d="M-2.2,-6.6 L4,-6.6 L1.6,-1.6 L5.8,-1.6 L-2.6,7.4 L-0.8,1.4 L-5.2,1.4 Z" fill="#2a78ad"/></g></svg>
<div class="t" style="top:147.21px;font-size:25.74px;line-height:25.74px;color:#080707;font-weight:700;left:2442.25px;">Setup</div>
<div class="t" style="top:204.17px;font-size:21.06px;line-height:21.06px;color:#3e3e3c;letter-spacing:0.5px;left:2370.03px;">Setup for current app</div>
<svg class="b" style="left:2650px;top:137px;" width="36" height="36" viewBox="0 0 36 36"><path d="M13.5,10 L6.2,10 C5,10 4.4,10.8 4.4,11.8 L4.4,30.8 C4.4,31.8 5,32.6 6.2,32.6 L25.2,32.6 C26.2,32.6 27,31.8 27,30.8 L27,23.5" fill="none" stroke="#8c8c8c" stroke-width="3.2"/><path d="M17.2,19.6 L30.4,6.4" stroke="#8c8c8c" stroke-width="3.2"/><path d="M21.6,5 L32,5 L32,15.4" fill="none" stroke="#8c8c8c" stroke-width="3.2"/></svg>
<svg class="b" style="left:2369px;top:304px;" width="48" height="48" viewBox="0 0 48 48"><g transform="translate(24,24) scale(1.0)"><rect x="-5.2" y="-21.5" width="10.4" height="12" rx="3.4" fill="#7b2fc5" transform="rotate(0)"/><rect x="-5.2" y="-21.5" width="10.4" height="12" rx="3.4" fill="#7b2fc5" transform="rotate(60)"/><rect x="-5.2" y="-21.5" width="10.4" height="12" rx="3.4" fill="#7b2fc5" transform="rotate(120)"/><rect x="-5.2" y="-21.5" width="10.4" height="12" rx="3.4" fill="#7b2fc5" transform="rotate(180)"/><rect x="-5.2" y="-21.5" width="10.4" height="12" rx="3.4" fill="#7b2fc5" transform="rotate(240)"/><rect x="-5.2" y="-21.5" width="10.4" height="12" rx="3.4" fill="#7b2fc5" transform="rotate(300)"/><circle r="15.6" fill="#7b2fc5"/><circle r="9.8" fill="#ffffff"/><path d="M-2.2,-6.6 L4,-6.6 L1.6,-1.6 L5.8,-1.6 L-2.6,7.4 L-0.8,1.4 L-5.2,1.4 Z" fill="#7b2fc5"/></g></svg>
<div class="t" style="top:315.51px;font-size:25.39px;line-height:25.39px;color:#080707;left:2441.83px;">Service Setup</div>
<svg class="b" style="left:2372px;top:386px;" width="48" height="48" viewBox="0 0 48 48"><path d="M7.6,19.5 A17.6,17.6 0 0 1 41.4,18.5" fill="none" stroke="#6f6f6f" stroke-width="3.6"/><path d="M7.6,28.5 A17.6,17.6 0 0 0 41.4,30" fill="none" stroke="#6f6f6f" stroke-width="3.6"/><polygon points="2.2,14.5 11.2,20.5 3.4,25" fill="#6f6f6f"/><polygon points="46,34.5 37,27.5 45,23.5" fill="#6f6f6f"/><path d="M29.6,19.8 C28.8,17.8 26.8,17.1 24.2,17.1 C21,17.1 18.8,18.5 18.8,20.9 C18.8,23.3 21,24.1 24.2,24.7 C27.8,25.3 29.7,26.4 29.7,28.5 C29.7,30.7 27.3,31.8 24.2,31.8 C21.4,31.8 19.2,30.8 18.5,28.6" fill="none" stroke="#6f6f6f" stroke-width="3.7"/><rect x="22.3" y="13" width="4.3" height="3.4" fill="#6f6f6f"/><rect x="22.3" y="32" width="4.3" height="3" fill="#6f6f6f"/></svg>
<div class="t" style="top:395.35px;font-size:25.57px;line-height:25.57px;color:#080707;left:2442.44px;">Your Account</div>
<div class="t" style="top:473.08px;font-size:25.3px;line-height:25.3px;color:#080707;left:2368.93px;">Developer Console</div>
<div class="t" style="top:576.80px;font-size:25.04px;line-height:25.04px;color:#080707;left:2368.95px;">Edit Page</div>
<svg class="b" style="left:2040px;top:140px;" width="300" height="90" viewBox="0 0 300 90"><defs><filter id="ash" x="-5%" y="-20%" width="110%" height="140%"><feDropShadow dx="0" dy="1.5" stdDeviation="1.2" flood-color="#000" flood-opacity="0.25"/></filter></defs><path d="M14,42.8 L228.6,29.2 L225.5,13 L284.5,42.2 L226,72 L228.6,57.1 L14,48.6 C10,48.4 10,43 14,42.8 Z" fill="#1d8df8" filter="url(#ash)"/></svg>
</body></html>
